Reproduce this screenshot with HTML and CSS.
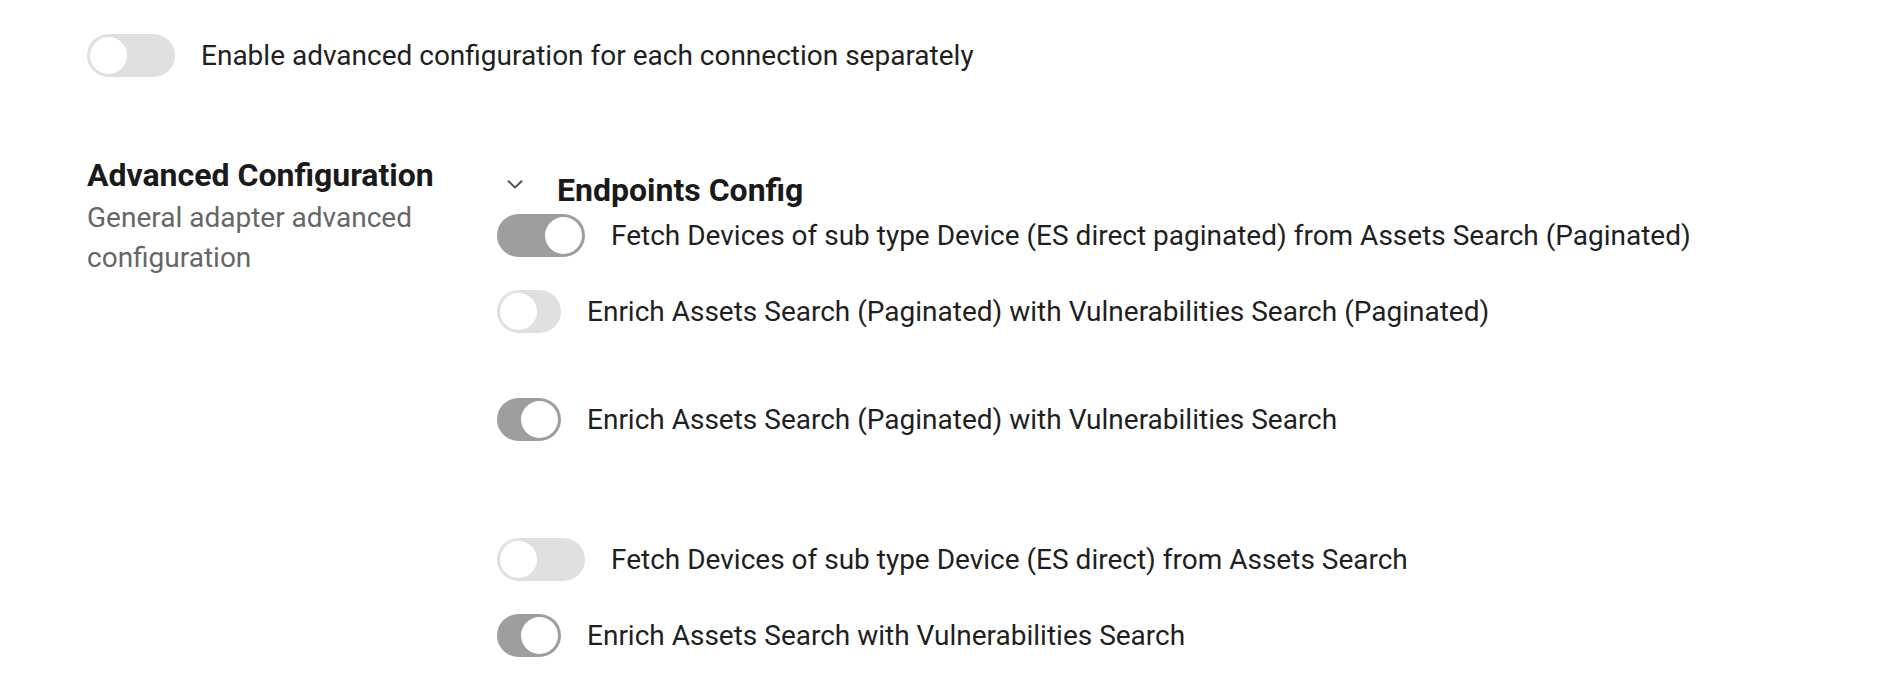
FILE: index.html
```html
<!DOCTYPE html>
<html lang="en">
<head>
<meta charset="utf-8">
<title>Advanced Configuration</title>
<link rel="stylesheet" href="styles.css">
</head>
<body>
<div class="page">
  <div class="toggle-row top-row">
    <span class="switch switch-wide"><span class="knob"></span></span>
    <span class="label">Enable advanced configuration for each connection separately</span>
  </div>

  <section class="adv">
    <div class="adv-info">
      <h2 class="adv-title">Advanced Configuration</h2>
      <p class="adv-desc">General adapter advanced configuration</p>
    </div>
    <div class="adv-body">
      <div class="group-header">
        <svg class="chevron" width="16" height="9" viewBox="0 0 16 9"><path d="M1.5 1.2 L8 7.5 L14.5 1.2" fill="none" stroke="#555" stroke-width="2" stroke-linecap="round" stroke-linejoin="round"/></svg>
        <h3 class="group-title">Endpoints Config</h3>
      </div>
      <div class="rows">
        <div class="toggle-row r1">
          <span class="switch switch-wide on"><span class="knob"></span></span>
          <span class="label">Fetch Devices of sub type Device (ES direct paginated) from Assets Search (Paginated)</span>
        </div>
        <div class="toggle-row r2">
          <span class="switch"><span class="knob"></span></span>
          <span class="label">Enrich Assets Search (Paginated) with Vulnerabilities Search (Paginated)</span>
        </div>
        <div class="toggle-row r3">
          <span class="switch on"><span class="knob"></span></span>
          <span class="label">Enrich Assets Search (Paginated) with Vulnerabilities Search</span>
        </div>
        <div class="toggle-row r4">
          <span class="switch switch-wide"><span class="knob"></span></span>
          <span class="label">Fetch Devices of sub type Device (ES direct) from Assets Search</span>
        </div>
        <div class="toggle-row r5">
          <span class="switch on"><span class="knob"></span></span>
          <span class="label">Enrich Assets Search with Vulnerabilities Search</span>
        </div>
      </div>
    </div>
  </section>
</div>
</body>
</html>
```

FILE: styles.css
```css
html, body {
  margin: 0;
  padding: 0;
  background: #ffffff;
}

body {
  font-family: Roboto, "Liberation Sans", Arial, sans-serif;
  color: #1f1f1f;
}

.page {
  padding: 34px 0 0 87px;
}

.toggle-row {
  display: flex;
  align-items: center;
  gap: 26px;
  height: 43px;
}

.label {
  font-size: 28px;
  line-height: 32px;
  white-space: nowrap;
}

.switch {
  display: flex;
  align-items: center;
  justify-content: flex-start;
  box-sizing: border-box;
  width: 64px;
  height: 43px;
  padding: 0 3px;
  border-radius: 22px;
  background: #e0e0e0;
  flex: none;
}

.switch-wide {
  width: 88px;
}

.switch.on {
  background: #9e9e9e;
  justify-content: flex-end;
}

.knob {
  width: 37px;
  height: 37px;
  border-radius: 50%;
  background: #ffffff;
}

.adv {
  display: flex;
  margin-top: 78px;
}

.adv-info {
  width: 410px;
  flex: none;
}

.adv-title {
  margin: 1px 0 0;
  font-size: 32px;
  line-height: 38px;
  font-weight: 700;
  color: #1a1a1a;
}

.adv-desc {
  margin: 4px 0 0;
  font-size: 28px;
  line-height: 40px;
  color: #666666;
  max-width: 360px;
}

.adv-body {
  padding-top: 16px;
}

.group-header {
  display: flex;
  align-items: flex-start;
  height: 38px;
}

.chevron {
  margin: 9px 0 0 10px;
  flex: none;
}

.group-title {
  margin: 0 0 0 34px;
  font-size: 32px;
  line-height: 38px;
  font-weight: 700;
  color: #1a1a1a;
}

.rows {
  margin-top: 5px;
  display: flex;
  flex-direction: column;
}

.r2 { margin-top: 33px; }
.r3 { margin-top: 65px; }
.r4 { margin-top: 97px; }
.r5 { margin-top: 33px; }
```
